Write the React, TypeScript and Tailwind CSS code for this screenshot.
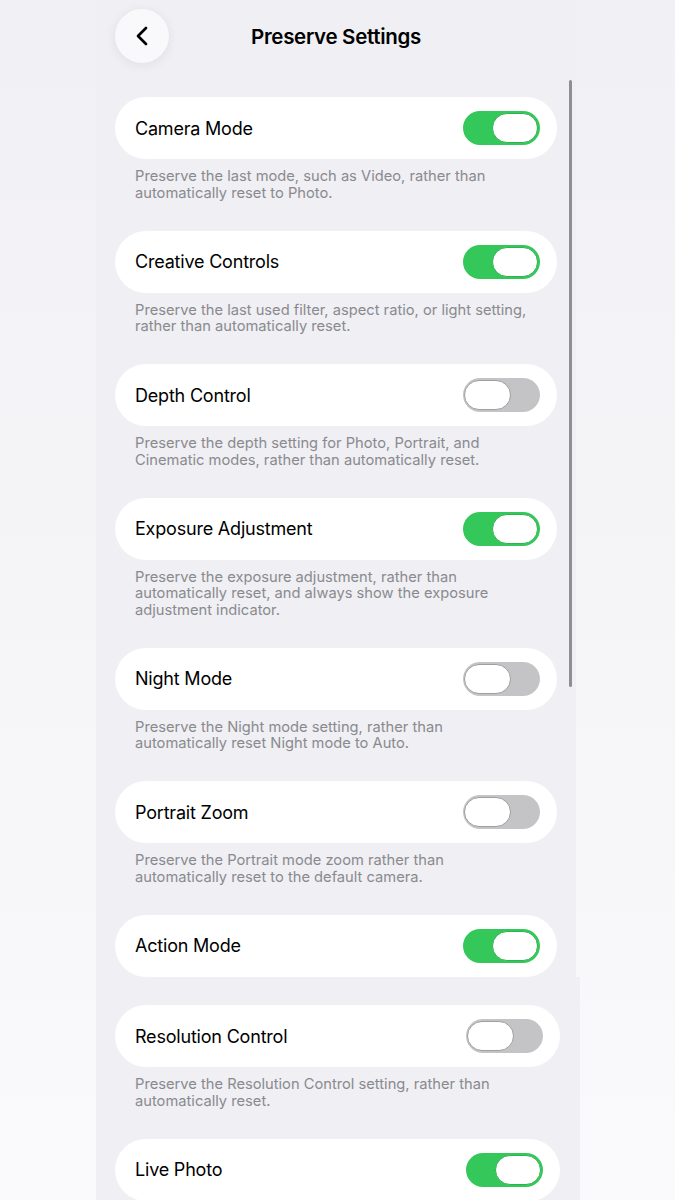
import { ChevronLeft } from "lucide-react";

type Setting = {
  label: string;
  on: boolean;
  note?: string;
};

const upper: Setting[] = [
  {
    label: "Camera Mode",
    on: true,
    note: "Preserve the last mode, such as Video, rather than automatically reset to Photo.",
  },
  {
    label: "Creative Controls",
    on: true,
    note: "Preserve the last used filter, aspect ratio, or light setting, rather than automatically reset.",
  },
  {
    label: "Depth Control",
    on: false,
    note: "Preserve the depth setting for Photo, Portrait, and Cinematic modes, rather than automatically reset.",
  },
  {
    label: "Exposure Adjustment",
    on: true,
    note: "Preserve the exposure adjustment, rather than automatically reset, and always show the exposure adjustment indicator.",
  },
  {
    label: "Night Mode",
    on: false,
    note: "Preserve the Night mode setting, rather than automatically reset Night mode to Auto.",
  },
  {
    label: "Portrait Zoom",
    on: false,
    note: "Preserve the Portrait mode zoom rather than automatically reset to the default camera.",
  },
  { label: "Action Mode", on: true },
];

const lower: Setting[] = [
  {
    label: "Resolution Control",
    on: false,
    note: "Preserve the Resolution Control setting, rather than automatically reset.",
  },
  { label: "Live Photo", on: true },
];

const Toggle = ({ on }: { on: boolean }) => (
  <div
    className={
      on
        ? "relative h-[34px] w-[77px] shrink-0 rounded-full bg-[#34c759]"
        : "relative h-[34px] w-[77px] shrink-0 rounded-full bg-[#c4c4c7]"
    }
  >
    <div
      className={
        on
          ? "absolute right-[2px] top-[2px] h-[30px] w-[46px] rounded-full border border-[#2fb350] bg-white"
          : "absolute left-[1px] top-[2px] h-[30px] w-[47px] rounded-full border border-[#9e9ea3] bg-white"
      }
    />
  </div>
);

const Row = ({ item, wide }: { item: Setting; wide?: boolean }) => (
  <div className={item.note ? "pb-[29.5px]" : "pb-[28px]"}>
    <div
      className={
        wide
          ? "ml-[19px] flex h-[62px] w-[445px] items-center justify-between rounded-full bg-white pl-[20px] pr-[17px]"
          : "ml-[19px] flex h-[62px] w-[442px] items-center justify-between rounded-full bg-white pl-[20px] pr-[17px]"
      }
    >
      <span className="text-[18px] tracking-[-0.2px] text-black">{item.label}</span>
      <Toggle on={item.on} />
    </div>
    {item.note && (
      <p className="w-[434px] pl-[39px] pt-[9px] text-[14.7px] leading-[16.5px] text-[#8a8a8e]">
        {item.note}
      </p>
    )}
  </div>
);

export default function App() {
  return (
    <div className="min-h-[1200px] w-full overflow-hidden bg-gradient-to-b from-[#f1f1f5] via-[#f5f5f8] to-[#fafafc] font-['Inter',sans-serif] antialiased">
      {/* top half of the settings sheet */}
      <div className="relative ml-[96px] h-[977px] w-[480px] bg-[#efeff4]">
        <header className="grid grid-cols-[54px_1fr_54px] items-center px-[19px] pt-[9px]">
          <button className="flex h-[54px] w-[54px] items-center justify-center rounded-full bg-[#f9f9fb] shadow-[0_2px_12px_rgba(0,0,0,0.07)]">
            <ChevronLeft className="h-[32px] w-[32px] text-black" strokeWidth={2} />
          </button>
          <h1 className="pt-[2px] text-center text-[20.5px] font-semibold tracking-[-0.3px] text-black">
            Preserve Settings
          </h1>
          <div />
        </header>

        <div className="pt-[34px]">
          {upper.map((item) => (
            <Row key={item.label} item={item} />
          ))}
        </div>

        {/* scroll indicator */}
        <div className="absolute left-[473px] top-[80px] h-[607px] w-[3px] rounded-full bg-[#8e8e93]" />
      </div>

      {/* bottom half */}
      <div className="ml-[96px] h-[223px] w-[484px] bg-[#efeff4] pt-[28px]">
        {lower.map((item) => (
          <Row key={item.label} item={item} wide />
        ))}
      </div>
    </div>
  );
}
